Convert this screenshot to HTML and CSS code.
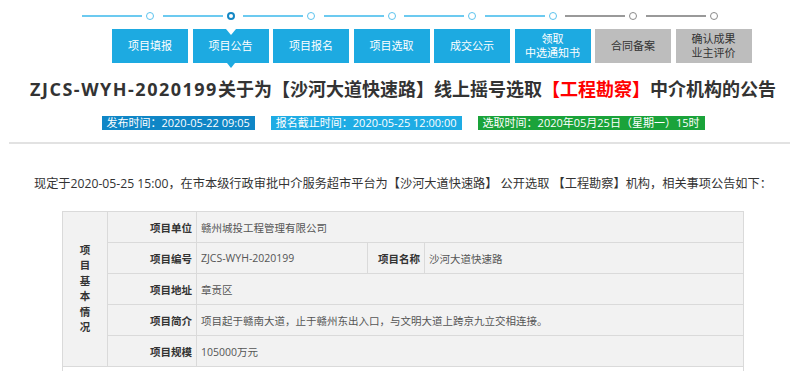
FILE: index.html
```html
<!DOCTYPE html>
<html lang="zh-CN">
<head>
    <meta charset="UTF-8">
    <meta name="viewport" content="width=device-width, initial-scale=1.0">
    <title>中介机构公告</title>
    <link rel="stylesheet" href="styles.css">
</head>
<body>

    <!-- 流程进度 -->
    <div class="track">
        <div class="track-item"><span class="seg"></span><span class="dot"></span></div>
        <div class="track-item"><span class="seg"></span><span class="dot active"></span></div>
        <div class="track-item"><span class="seg"></span><span class="dot"></span></div>
        <div class="track-item"><span class="seg"></span><span class="dot"></span></div>
        <div class="track-item"><span class="seg"></span><span class="dot"></span></div>
        <div class="track-item"><span class="seg"></span><span class="dot"></span></div>
        <div class="track-item off"><span class="seg"></span><span class="dot"></span></div>
        <div class="track-item off"><span class="seg"></span><span class="dot"></span></div>
    </div>

    <div class="steps">
        <div class="step">项目填报</div>
        <div class="step current">项目公告</div>
        <div class="step">项目报名</div>
        <div class="step">项目选取</div>
        <div class="step">成交公示</div>
        <div class="step">领取<br>中选通知书</div>
        <div class="step off">合同备案</div>
        <div class="step off">确认成果<br>业主评价</div>
    </div>

    <div class="page">
        <h1 class="title"><span class="code">ZJCS-WYH-2020199</span>关于为【沙河大道快速路】线上摇号选取<span class="red">【工程勘察】</span>中介机构的公告</h1>

        <div class="dates">
            <span class="badge dark">发布时间：2020-05-22 09:05</span>
            <span class="badge light">报名截止时间：2020-05-25 12:00:00</span>
            <span class="badge green">选取时间：2020年05月25日（星期一）15时</span>
        </div>

        <div class="content">
            <p class="intro">现定于2020-05-25 15:00，在市本级行政审批中介服务超市平台为【沙河大道快速路】 公开选取 【工程勘察】机构，相关事项公告如下：</p>

            <table class="info">
                <colgroup>
                    <col style="width: 45px">
                    <col style="width: 89px">
                    <col style="width: 171px">
                    <col style="width: 57px">
                    <col>
                </colgroup>
                <tr>
                    <td class="group" rowspan="5">项<br>目<br>基<br>本<br>情<br>况</td>
                    <th>项目单位</th>
                    <td colspan="3">赣州城投工程管理有限公司</td>
                </tr>
                <tr>
                    <th>项目编号</th>
                    <td>ZJCS-WYH-2020199</td>
                    <th>项目名称</th>
                    <td>沙河大道快速路</td>
                </tr>
                <tr>
                    <th>项目地址</th>
                    <td colspan="3">章贡区</td>
                </tr>
                <tr>
                    <th>项目简介</th>
                    <td colspan="3">项目起于赣南大道，止于赣州东出入口，与文明大道上跨京九立交相连接。</td>
                </tr>
                <tr>
                    <th>项目规模</th>
                    <td colspan="3">105000万元</td>
                </tr>
                <tr class="blank">
                    <td colspan="5"></td>
                </tr>
            </table>
        </div>
    </div>

</body>
</html>
```

FILE: styles.css
```css
html, body {
    overflow: hidden;
}

body {
    margin: 0;
    background-color: #fff;
    color: #333;
    font-family: "Open Sans", "Noto Sans CJK SC", sans-serif;
}

/* 进度线 */
.track {
    display: flex;
    margin-left: 82px;
    padding-top: 12px;
    height: 17px;
}

.track-item {
    display: flex;
    align-items: center;
    width: 80.5px;
    height: 8px;
    flex-shrink: 0;
}

.seg {
    width: 60px;
    height: 1.5px;
    background-color: #6ccaf0;
    margin-right: 4px;
}

.dot {
    box-sizing: border-box;
    width: 8px;
    height: 8px;
    border: 1.5px solid #5cc3ee;
    border-radius: 50%;
    background-color: #fff;
}

.dot.active {
    border: 2px solid #1487c4;
}

.track-item.off .seg {
    background-color: #999;
}

.track-item.off .dot {
    border-color: #8a8a8a;
}

/* 流程按钮 */
.steps {
    display: flex;
    gap: 4.5px;
    margin-left: 112px;
}

.step {
    position: relative;
    display: flex;
    align-items: center;
    justify-content: center;
    width: 76px;
    height: 34px;
    flex-shrink: 0;
    background-color: #1daae1;
    color: #fff;
    font-size: 11px;
    line-height: 14px;
    text-align: center;
}

.step.off {
    background-color: #bdbdbd;
    color: #333;
}

.step.current::before {
    content: "";
    position: absolute;
    top: 0;
    left: 33px;
    border-left: 5px solid transparent;
    border-right: 5px solid transparent;
    border-top: 6px solid #fff;
}

.step.current::after {
    content: "";
    position: absolute;
    bottom: -5px;
    left: 34px;
    border-left: 4px solid transparent;
    border-right: 4px solid transparent;
    border-top: 5px solid #1daae1;
}

/* 正文 */
.page {
    width: 788px;
    margin-left: 9px;
}

.title {
    margin: 13px 0 0;
    font-size: 18px;
    line-height: 26px;
    font-weight: bold;
    text-align: center;
    color: #333;
    white-space: nowrap;
}

.code {
    letter-spacing: 1.5px;
}

.red {
    color: #f00;
}

.dates {
    display: flex;
    justify-content: center;
    gap: 16px;
    margin-top: 14px;
}

.badge {
    height: 14px;
    line-height: 14px;
    padding: 0 5px;
    font-size: 11px;
    color: #fff;
    white-space: nowrap;
}

.badge.dark {
    background-color: #0f86c6;
}

.badge.light {
    background-color: #1eace4;
}

.badge.green {
    background-color: #1aa33a;
}

.content {
    margin-top: 12px;
    border-top: 2px solid #e2e2e2;
}

.intro {
    margin: 30px 0 0;
    text-indent: 25px;
    font-size: 12.2px;
    line-height: 20px;
    color: #333;
    white-space: nowrap;
}

.info {
    width: 682px;
    margin: 17px auto 0;
    border-collapse: collapse;
    table-layout: fixed;
    background-color: #f2f2f2;
    font-size: 10.5px;
}

.info td,
.info th {
    height: 30px;
    padding: 0 4px;
    border: 1px solid #dadada;
    color: #555;
    font-weight: normal;
    text-align: left;
    white-space: nowrap;
}

.info th {
    text-align: right;
    font-weight: bold;
    color: #333;
}

.info td.group {
    padding: 0;
    text-align: center;
    font-weight: bold;
    color: #333;
    line-height: 15.5px;
}

.info tr.blank td {
    background-color: #fff;
    height: 40px;
}
```
